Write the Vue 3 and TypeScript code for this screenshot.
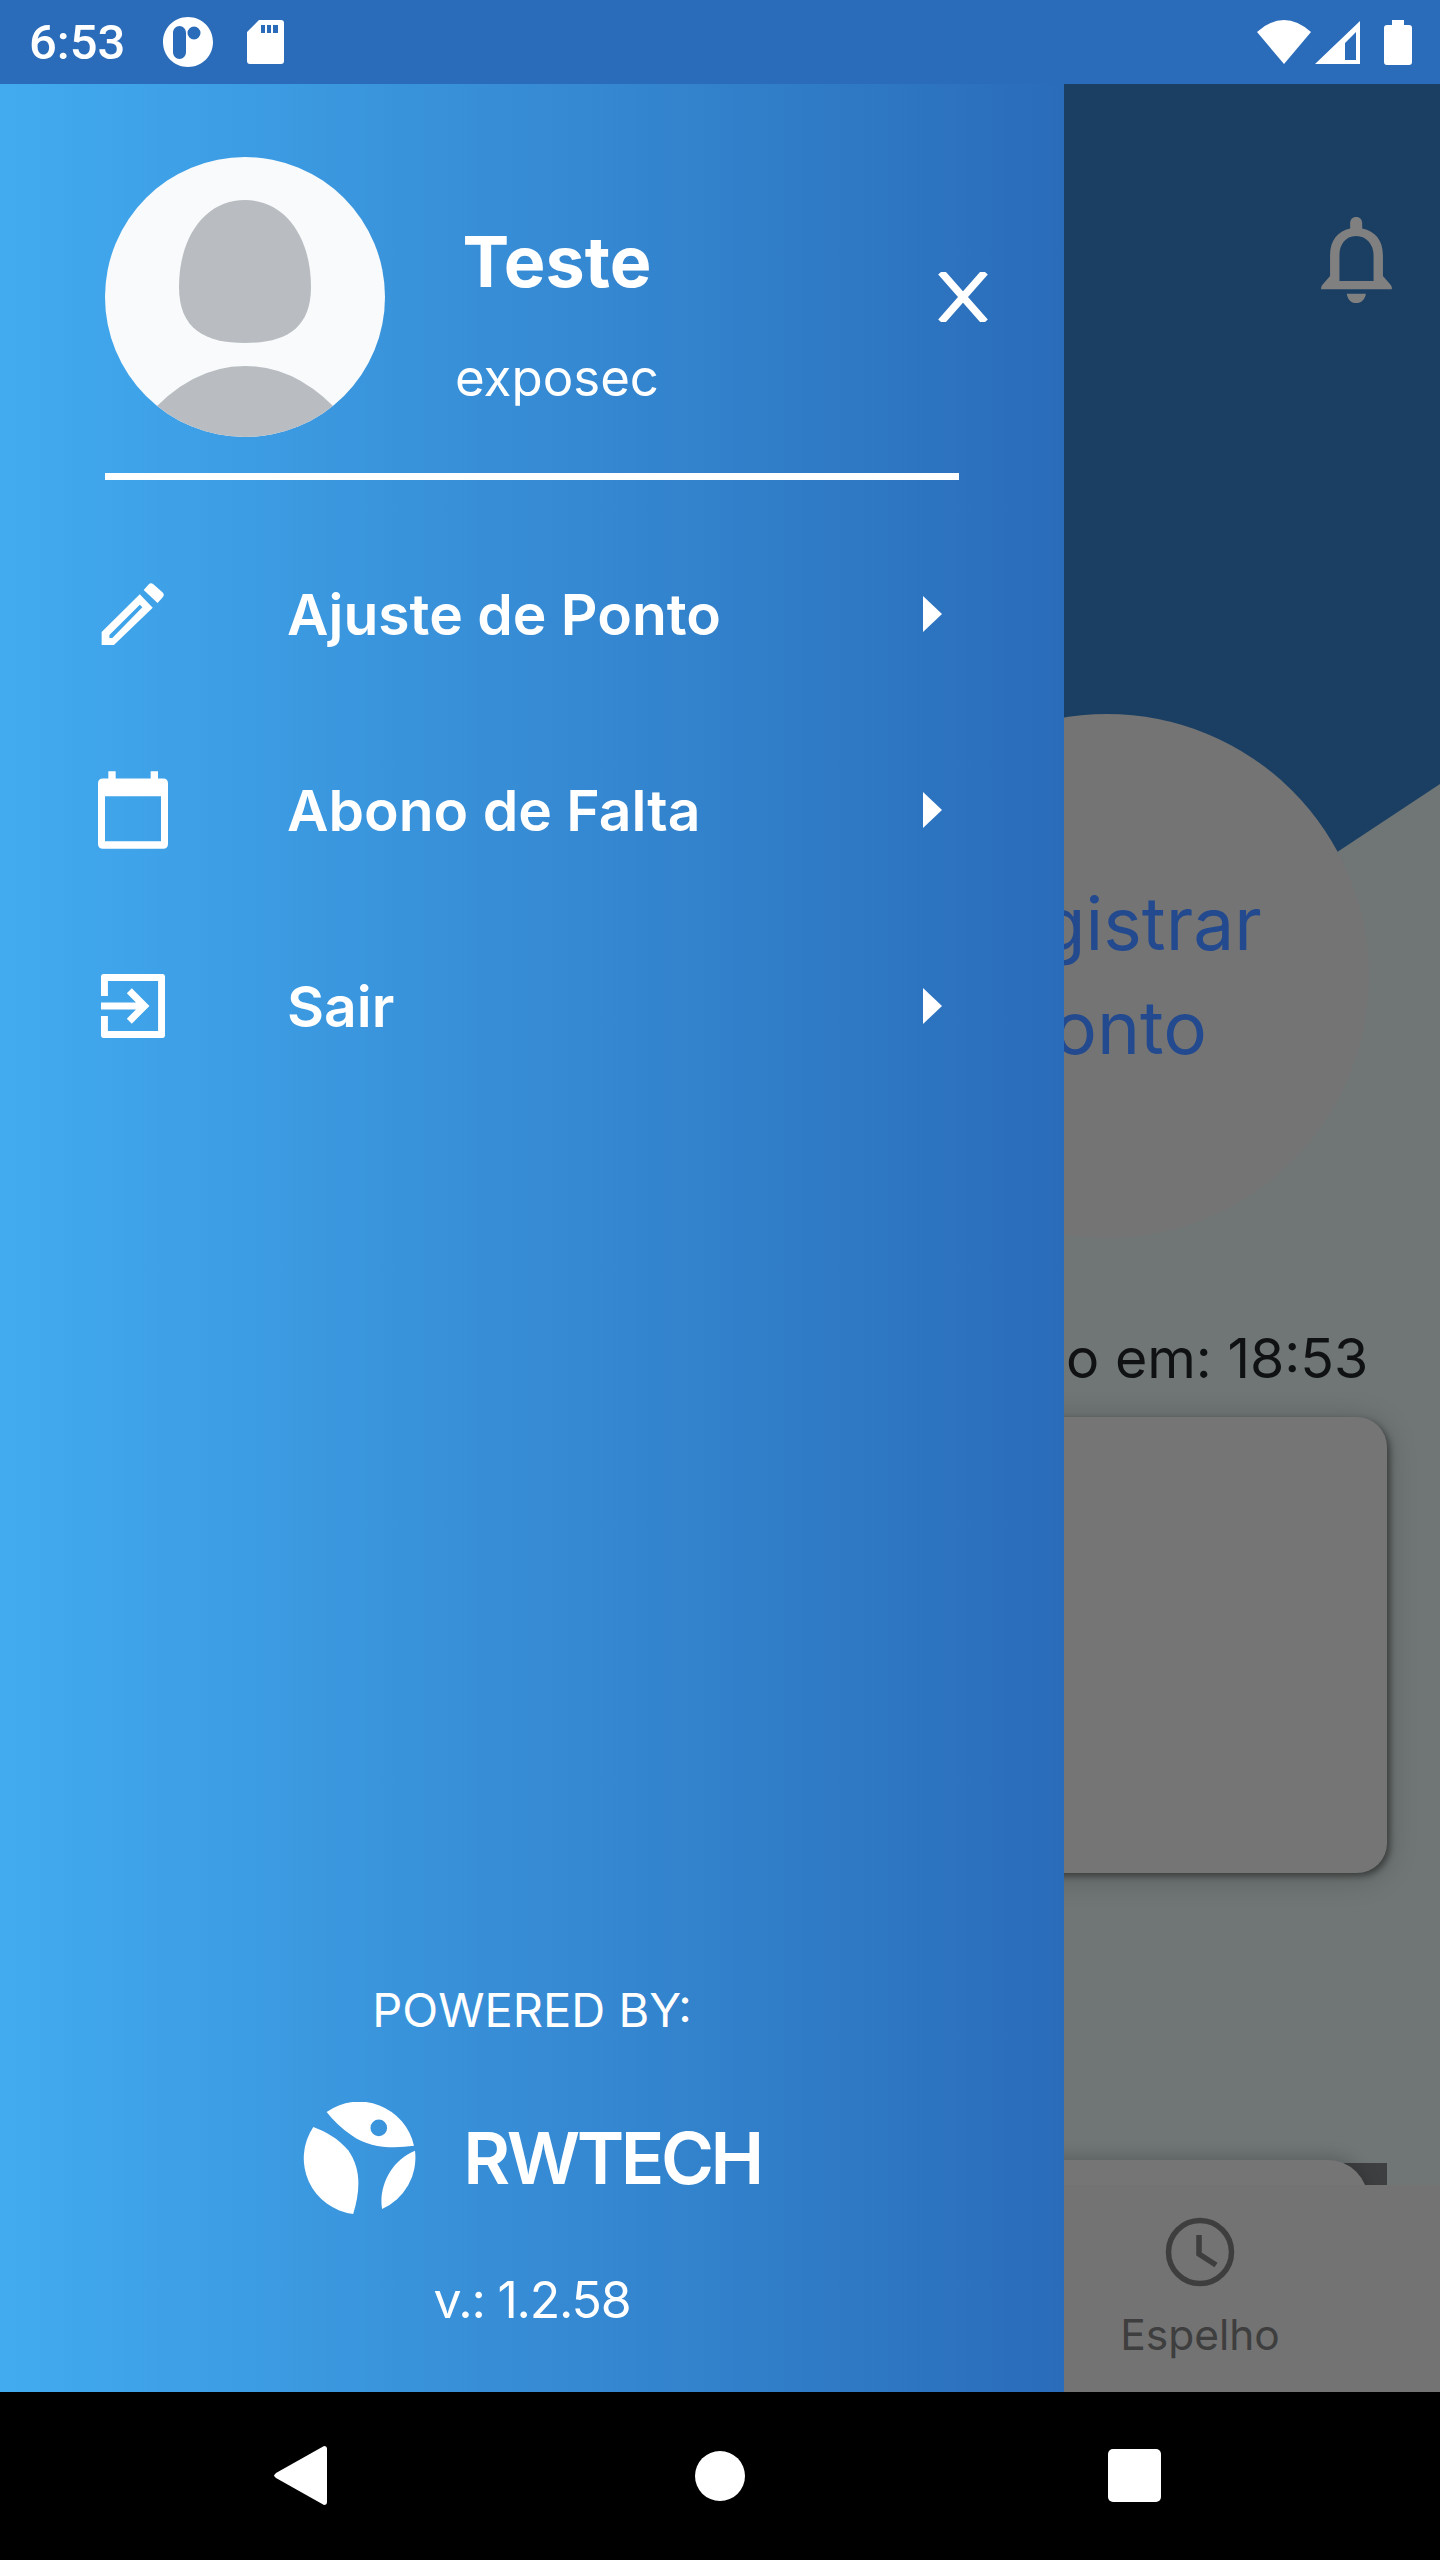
<template>
  <div class="phone">
    <header class="status-bar">
      <div class="status-left">
        <span class="clock">6:53</span>
        <svg class="app-icon" viewBox="0 0 50 50">
          <path fill-rule="evenodd" d="M25 0C39 0 50 11 50 25S39 50 25 50 0 39 0 25 11 0 25 0ZM16.500 9C13 9 10 12 10 16V35C10 39 13 42 16.500 42S23 39 23 35V16C23 12 20 9 16.500 9ZM31 9.500A6.500 6.500 0 1 0 31 22.500 6.500 6.500 0 1 0 31 9.500Z" fill="#fff" />
        </svg>
        <svg class="sd-icon" viewBox="0 0 37 44">
          <path fill-rule="evenodd" d="M12 0H34Q37 0 37 3V41Q37 44 34 44H3Q0 44 0 41V12ZM14 5V13H18V5ZM20 5V13H24V5ZM26 5V13H31V5Z" fill="#fff" />
        </svg>
      </div>
      <div class="status-right">
        <svg class="wifi-icon" viewBox="0 0 54 44"><path d="M27 44L0 12Q27-12 54 12Z" fill="#fff" /></svg>
        <svg class="signal-icon" viewBox="0 0 45 43">
          <path fill-rule="evenodd" d="M0 43L45 0V43ZM30 22V39H41V11Z" fill="#fff" />
        </svg>
        <svg class="battery-icon" viewBox="0 0 28 45">
          <path d="M8 0H20V5H25Q28 5 28 8V42Q28 45 25 45H3Q0 45 0 42V8Q0 5 3 5H8Z" fill="#fff" />
        </svg>
      </div>
    </header>

    <main class="screen">
      <!-- app page dimmed behind the drawer -->
      <section class="page">
        <div class="wave"></div>
        <svg class="bell" viewBox="63 36 212 257">
          <path fill-rule="evenodd" d="M168 36C180 36 187 45 186 58V70C225 78 248 105 248 150V212L272 240Q275 245 275 252H63Q63 245 66 240L90 212V150C90 105 113 78 150 70V58C149 45 156 36 168 36ZM168 93C135 93 118 120 118 150V227H220V150C220 120 200 93 168 93ZM140 265H197C195 282 183 293 168 293S142 282 140 265Z" fill="#808080" />
        </svg>
        <div class="register-circle">
          <span class="register-text">Registrar<br />Ponto</span>
        </div>
        <p class="last-time">o em: 18:53</p>
        <div class="card"></div>
        <div class="lower-shadow"></div>
        <div class="lower-card"></div>
        <div class="tabbar">
          <div class="tab">
            <svg class="tab-icon" viewBox="0 0 70 70" fill="none" stroke="#3e3e3e" stroke-width="5.500">
              <circle cx="35" cy="35" r="31.500" />
              <path d="M34 18V37L51 48" />
            </svg>
            <span class="tab-label">Espelho</span>
          </div>
        </div>
      </section>

      <!-- side drawer -->
      <aside class="drawer">
        <div class="profile">
          <svg class="avatar" viewBox="0 0 280 280">
            <defs>
              <clipPath id="avatarClip"><circle cx="140" cy="140" r="140" /></clipPath>
            </defs>
            <circle cx="140" cy="140" r="140" fill="#f9fafc" />
            <path d="M140 43C100 43 74 80 74 130C74 172 100 186 140 186C180 186 206 172 206 130C206 80 180 43 140 43Z" fill="#b9bdc1" />
            <path d="M40 262Q85 209 140 209Q195 209 240 262V290H40Z" fill="#b9bdc1" clip-path="url(#avatarClip)" />
          </svg>
          <div class="who">
            <span class="who-name">Teste</span>
            <span class="who-company">exposec</span>
          </div>
          <svg class="close" viewBox="0 0 50 50" stroke="#fff" stroke-width="7.500">
            <path d="M3 0L47 50M47 0L3 50" />
          </svg>
        </div>
        <div class="divider"></div>

        <nav class="menu">
          <a v-for="item in menu" :key="item.label" class="menu-item">
            <span class="menu-icon">
              <svg v-if="item.icon === 'edit'" class="icon-edit" viewBox="120 90 198 198" fill="#fff">
                <path fill-rule="evenodd" d="M122 285V245L240 128L280 170L160 285ZM146 254L240 160L248 168L155 263H146Z" />
                <path d="M252 115L268 97Q274 91 282 97L310 122Q318 130 311 137L295 155Z" />
              </svg>
              <svg v-else-if="item.icon === 'calendar'" class="icon-calendar" viewBox="114 660 210 233" fill="#fff">
                <path fill-rule="evenodd" d="M145 660H167V682H272V660H294V682H309Q324 682 324 697V878Q324 893 309 893H129Q114 893 114 878V697Q114 682 129 682H145ZM135 735V870H303V735Z" />
              </svg>
              <svg v-else class="icon-exit" viewBox="124 1270 190 190" fill="none" stroke="#fff" stroke-width="21">
                <path d="M134 1335V1280H304V1450H134V1395" stroke-linejoin="round" />
                <path d="M124 1365H250M208 1320L253 1365L208 1410" />
              </svg>
            </span>
            <span class="menu-label">{{ item.label }}</span>
            <svg class="menu-arrow" viewBox="0 0 19 36"><path d="M0 0L19 18L0 36Z" fill="#fff" /></svg>
          </a>
        </nav>

        <footer class="powered">
          <span class="powered-by">POWERED BY:</span>
          <div class="brand">
            <svg class="brand-mark" viewBox="70 425 338 337" fill="#fff">
              <path fill-rule="evenodd" d="M140 455A169 169 0 0 1 403 557C340 565 270 565 215 525C185 505 160 480 140 455ZM297 478A25 25 0 1 0 297 528A25 25 0 1 0 297 478Z" />
              <path d="M100 500A169 169 0 0 0 220 762C245 680 240 620 205 570C175 535 140 515 100 500Z" />
              <path d="M406 572A169 169 0 0 1 307 747C295 680 335 600 406 572Z" />
            </svg>
            <span class="brand-name">RWTECH</span>
          </div>
          <span class="version">v.: {{ version }}</span>
        </footer>
      </aside>
    </main>

    <footer class="nav-bar">
      <svg class="nav-back" viewBox="0 0 53 59"><path d="M50 0Q53 0 53 3V56Q53 59 50 59L2 32Q0 30 0 29.500T2 27Z" fill="#fff" /></svg>
      <span class="nav-home"></span>
      <span class="nav-recent"></span>
    </footer>
  </div>
</template>

<script setup lang="ts">
interface MenuItem {
  label: string
  icon: 'edit' | 'calendar' | 'exit'
}

const version = '1.2.58'

const menu: MenuItem[] = [
  { label: 'Ajuste de Ponto', icon: 'edit' },
  { label: 'Abono de Falta', icon: 'calendar' },
  { label: 'Sair', icon: 'exit' }
]
</script>

<style>
html,
body {
  margin: 0;
  background: #000;
}
</style>

<style scoped>
.phone {
  width: 1440px;
  height: 2560px;
  display: flex;
  flex-direction: column;
  overflow: hidden;
  font-family: Inter, "Noto Sans", sans-serif;
}

.status-bar {
  height: 84px;
  flex: none;
  display: flex;
  align-items: center;
  justify-content: space-between;
  padding: 0 28px 0 29px;
  background: #2a6cb9;
}

.status-left {
  display: flex;
  align-items: center;
}

.clock {
  width: 134px;
  font-family: Roboto, sans-serif;
  font-size: 49px;
  font-weight: 500;
  color: #fff;
}

.app-icon {
  width: 50px;
  height: 50px;
  margin-right: 34px;
}

.sd-icon {
  width: 37px;
  height: 44px;
}

.status-right {
  display: flex;
  align-items: center;
}

.wifi-icon {
  width: 54px;
  height: 44px;
  margin-right: 4px;
}

.signal-icon {
  width: 45px;
  height: 43px;
  margin-right: 24px;
}

.battery-icon {
  width: 28px;
  height: 45px;
}

.screen {
  position: relative;
  flex: 1;
  overflow: hidden;
}

.page {
  position: absolute;
  inset: 0;
  background: #6f7675;
  overflow: hidden;
}

.wave {
  position: absolute;
  inset: 0 0 auto 0;
  height: 1000px;
  background: #1b3f63;
  clip-path: polygon(0 0, 100% 0, 100% 700px, 1064px 949px, 0 949px);
}

.bell {
  position: absolute;
  left: 1321px;
  top: 133px;
  width: 71px;
  height: 86px;
}

.register-circle {
  position: absolute;
  left: 845px;
  top: 630px;
  width: 524px;
  height: 524px;
  border-radius: 50%;
  background: #747474;
  display: flex;
  justify-content: center;
  padding-top: 158px;
  box-sizing: border-box;
}

.register-text {
  font-size: 73px;
  line-height: 104px;
  text-align: center;
  color: #234a8f;
}

.last-time {
  position: absolute;
  left: 1066px;
  top: 1242px;
  margin: 0;
  font-size: 55.500px;
  line-height: 64px;
  color: #0f1112;
  white-space: nowrap;
}

.card {
  position: absolute;
  left: 800px;
  top: 1333px;
  width: 587px;
  height: 456px;
  border-radius: 30px;
  background: #757575;
  box-shadow: 0 4px 30px rgba(0, 0, 0, 0.22), 3px 3px 6px rgba(0, 0, 0, 0.4);
}

.lower-shadow {
  position: absolute;
  left: 1100px;
  top: 2079px;
  width: 287px;
  height: 30px;
  background: #3d3f40;
}

.lower-card {
  position: absolute;
  left: 800px;
  top: 2076px;
  width: 568px;
  height: 80px;
  border-radius: 40px 40px 0 0;
  background: #757575;
  box-shadow: 0 -4px 16px rgba(0, 0, 0, 0.18);
}

.tabbar {
  position: absolute;
  left: 0;
  right: 0;
  bottom: 0;
  height: 207px;
  padding-left: 1120px;
  box-sizing: border-box;
  background: #737373;
}

.tab {
  width: 160px;
  padding-top: 32px;
  display: flex;
  flex-direction: column;
  align-items: center;
}

.tab-icon {
  width: 70px;
  height: 70px;
}

.tab-label {
  margin-top: 20px;
  font-size: 42.500px;
  line-height: 56px;
  color: #3e3e3e;
}

.drawer {
  position: absolute;
  left: 0;
  top: 0;
  bottom: 0;
  width: 1064px;
  display: flex;
  flex-direction: column;
  padding: 73px 105px 0;
  box-sizing: border-box;
  background: linear-gradient(90deg, #42abf0, #2a6cb9);
  color: #fff;
}

.profile {
  display: flex;
  align-items: center;
  height: 280px;
  margin-right: -29px;
}

.avatar {
  width: 280px;
  height: 280px;
  flex: none;
}

.who {
  width: 344px;
  padding-top: 34px;
  display: flex;
  flex-direction: column;
  align-items: center;
}

.who-name {
  font-size: 70px;
  line-height: 84px;
  font-weight: 700;
}

.who-company {
  margin-top: 44px;
  font-size: 51px;
  line-height: 60px;
}

.close {
  width: 50px;
  height: 50px;
  margin-left: 209px;
  flex: none;
}

.divider {
  width: 854px;
  height: 7px;
  margin-top: 36px;
  background: #fff;
}

.menu {
  margin-top: 36px;
  display: flex;
  flex-direction: column;
}

.menu-item {
  height: 196px;
  display: flex;
  align-items: center;
}

.menu-icon {
  width: 189px;
  margin-left: -7px;
  display: flex;
}

.icon-edit {
  width: 64px;
  height: 64px;
  margin-left: 3px;
}

.icon-calendar {
  width: 70px;
  height: 78px;
}

.icon-exit {
  width: 64px;
  height: 64px;
  margin-left: 3px;
}

.menu-label {
  width: 636px;
  font-size: 57px;
  font-weight: 600;
}

.menu-arrow {
  width: 19px;
  height: 36px;
}

.powered {
  margin-top: auto;
  padding-bottom: 62px;
  display: flex;
  flex-direction: column;
  align-items: center;
}

.powered-by {
  font-size: 47px;
  line-height: 60px;
}

.brand {
  margin-top: 62px;
  display: flex;
  align-items: center;
}

.brand-mark {
  width: 113px;
  height: 112px;
}

.brand-name {
  margin-left: 47px;
  font-size: 72px;
  font-weight: 600;
  line-height: 80px;
  letter-spacing: -3.500px;
}

.version {
  margin-top: 56px;
  font-size: 50px;
  line-height: 60px;
  letter-spacing: -1.200px;
}

.nav-bar {
  height: 168px;
  flex: none;
  position: relative;
  background: #000;
}

.nav-back {
  position: absolute;
  left: 274px;
  top: 54px;
  width: 53px;
  height: 59px;
}

.nav-home {
  position: absolute;
  left: 695px;
  top: 59px;
  width: 50px;
  height: 50px;
  border-radius: 50%;
  background: #fff;
}

.nav-recent {
  position: absolute;
  left: 1108px;
  top: 57px;
  width: 53px;
  height: 53px;
  border-radius: 5px;
  background: #fff;
}
</style>
